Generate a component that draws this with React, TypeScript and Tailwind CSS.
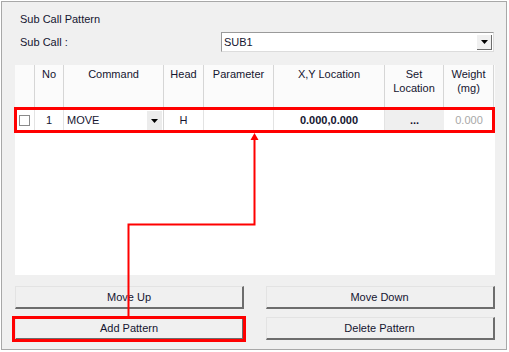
const font = { fontFamily: '"Liberation Sans", Arial, sans-serif' }

function Btn({ label }: { label: string }) {
  return (
    <button className="w-[229px] h-[23px] bg-[#f0f0f0] border-t border-l border-t-[#e3e3e3] border-l-[#e3e3e3] border-r-2 border-b-2 border-r-[#6d6d6d] border-b-[#6d6d6d] text-[11px] text-[#151530] flex items-center justify-center">
      {label}
    </button>
  )
}

function DropArrow() {
  return (
    <svg width="7" height="4" viewBox="0 0 7 4"><path d="M0 0h7L3.5 4z" fill="#000" /></svg>
  )
}

export default function App() {
  return (
    <div className="w-[509px] h-[352px] bg-white p-[1px] relative" style={font}>
      <div className="w-[506px] h-[349px] border border-[#a8a8a8] bg-[#f0f0f0] text-[#151530] text-[11px] flex flex-col">
        <div className="pl-[18px] pt-[10px] h-[24px] leading-[14px]">Sub Call Pattern</div>
        <div className="flex items-center h-[20px] mt-[6px] pl-[18px]">
          <span className="w-[201px]">Sub Call :</span>
          <div className="w-[273px] h-[20px] bg-white border border-[#9a9a9a] border-r-[#dcdcdc] border-b-[#dcdcdc] flex items-center justify-between pl-[2px] pr-[1px]">
            <span>SUB1</span>
            <div className="w-[15px] h-[15px] bg-[#f0f0f0] border-r border-b border-[#6d6d6d] flex items-center justify-center">
              <DropArrow />
            </div>
          </div>
        </div>
        <div className="ml-[13px] mt-[13px] w-[480px] h-[210px] bg-white">
          <div className="grid grid-cols-[20px_29px_100px_40px_70px_111px_59px_50px] h-[43px] bg-[#fbfbfb] text-center leading-[14px]">
            {['', 'No', 'Command', 'Head', 'Parameter', 'X,Y Location', 'Set Location', 'Weight (mg)'].map((h, i) => (
              <div key={i} className="border-r border-[#d6d6d6] pt-[2px] px-[2px]">
                {h === 'Set Location' ? <>Set<br />Location</> : h === 'Weight (mg)' ? <>Weight<br />(mg)</> : h}
              </div>
            ))}
          </div>
          <div className="grid grid-cols-[20px_29px_100px_40px_70px_111px_59px_50px] h-[23px] items-stretch pt-[2px]">
            <div className="flex items-center justify-center border-r border-[#e3e3e3]">
              <div className="w-[11px] h-[11px] border border-[#8a8a8a] bg-white" />
            </div>
            <div className="flex items-center justify-center border-r border-[#e3e3e3]">1</div>
            <div className="flex items-center justify-between pl-[3px] border-r border-[#d6d6d6]">
              <span>MOVE</span>
              <div className="w-[15px] h-[19px] bg-[#ececec] flex items-center justify-center mr-[1px]">
                <DropArrow />
              </div>
            </div>
            <div className="flex items-center justify-center border-r border-[#e3e3e3]">H</div>
            <div className="border-r border-[#e3e3e3]" />
            <div className="flex items-center justify-center font-bold border-r border-[#e3e3e3]">0.000,0.000</div>
            <div className="flex items-center justify-center bg-[#efefef] font-bold">...</div>
            <div className="flex items-center justify-center text-[#a8a8a8]">0.000</div>
          </div>
        </div>
        <div className="ml-[13px] mt-[11px] w-[480px] grid grid-cols-2 gap-x-[21px] gap-y-[8px]">
          <Btn label="Move Up" />
          <Btn label="Move Down" />
          <Btn label="Add Pattern" />
          <Btn label="Delete Pattern" />
        </div>
      </div>

      <div className="absolute left-[14px] top-[107px] w-[481px] h-[26px] border-[3px] border-[#ff0000]" />
      <div className="absolute left-[12px] top-[316px] w-[234px] h-[26px] border-[3px] border-[#ff0000]" />
      <svg className="absolute left-0 top-0" width="509" height="352">
        <polyline points="128.5,316 128.5,224.5 254.5,224.5 254.5,139" fill="none" stroke="#ff0000" strokeWidth="2" />
        <path d="M254.5 133 L258.5 140 L250.5 140 Z" fill="#ff0000" />
      </svg>
    </div>
  )
}
